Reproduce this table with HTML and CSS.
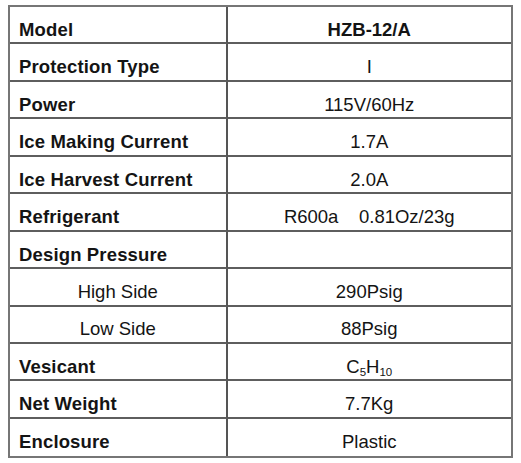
FILE: index.html
```html
<!DOCTYPE html>
<html>
<head>
<meta charset="utf-8">
<link rel="stylesheet" href="styles.css">
</head>
<body>
<div class="spec">
  <div class="cell label">Model</div><div class="cell value strong">HZB-12/A</div>
  <div class="cell label">Protection Type</div><div class="cell value">I</div>
  <div class="cell label">Power</div><div class="cell value">115V/60Hz</div>
  <div class="cell label">Ice Making Current</div><div class="cell value">1.7A</div>
  <div class="cell label">Ice Harvest Current</div><div class="cell value">2.0A</div>
  <div class="cell label">Refrigerant</div><div class="cell value">R600a&nbsp;&nbsp;&nbsp;&nbsp;0.81Oz/23g</div>
  <div class="cell label">Design Pressure</div><div class="cell value"></div>
  <div class="cell sub">High Side</div><div class="cell value">290Psig</div>
  <div class="cell sub">Low Side</div><div class="cell value">88Psig</div>
  <div class="cell label">Vesicant</div><div class="cell value">C<span class="subs">5</span>H<span class="subs">10</span></div>
  <div class="cell label">Net Weight</div><div class="cell value">7.7Kg</div>
  <div class="cell label last">Enclosure</div><div class="cell value last">Plastic</div>
</div>
</body>
</html>
```
FILE: styles.css
```css
html, body {
  margin: 0;
  padding: 0;
  background: #ffffff;
}
body {
  padding: 5px 0 0 8px;
  font-family: "Liberation Sans", Arial, sans-serif;
  color: #141414;
}
.spec {
  box-sizing: border-box;
  width: 505px;
  border: 2px solid #767676;
  display: grid;
  grid-template-columns: 217.5px 1fr;
  grid-auto-rows: 37.45px;
}
.cell {
  box-sizing: border-box;
  border-bottom: 2px solid #5e5e5e;
  display: flex;
  align-items: flex-end;
  padding: 0 0 2.5px 0;
  font-size: 18.5px;
  line-height: 21px;
  white-space: nowrap;
}
.cell.last {
  border-bottom: none;
  padding-bottom: 4.5px;
}
.label {
  font-weight: bold;
  padding-left: 9px;
  letter-spacing: 0.15px;
  border-right: 2px solid #555555;
}
.sub {
  justify-content: center;
  border-right: 2px solid #555555;
}
.value {
  justify-content: center;
}
.strong {
  font-weight: bold;
}
.subs {
  font-size: 11.5px;
  line-height: 12px;
  position: relative;
  top: 1.5px;
}
```
